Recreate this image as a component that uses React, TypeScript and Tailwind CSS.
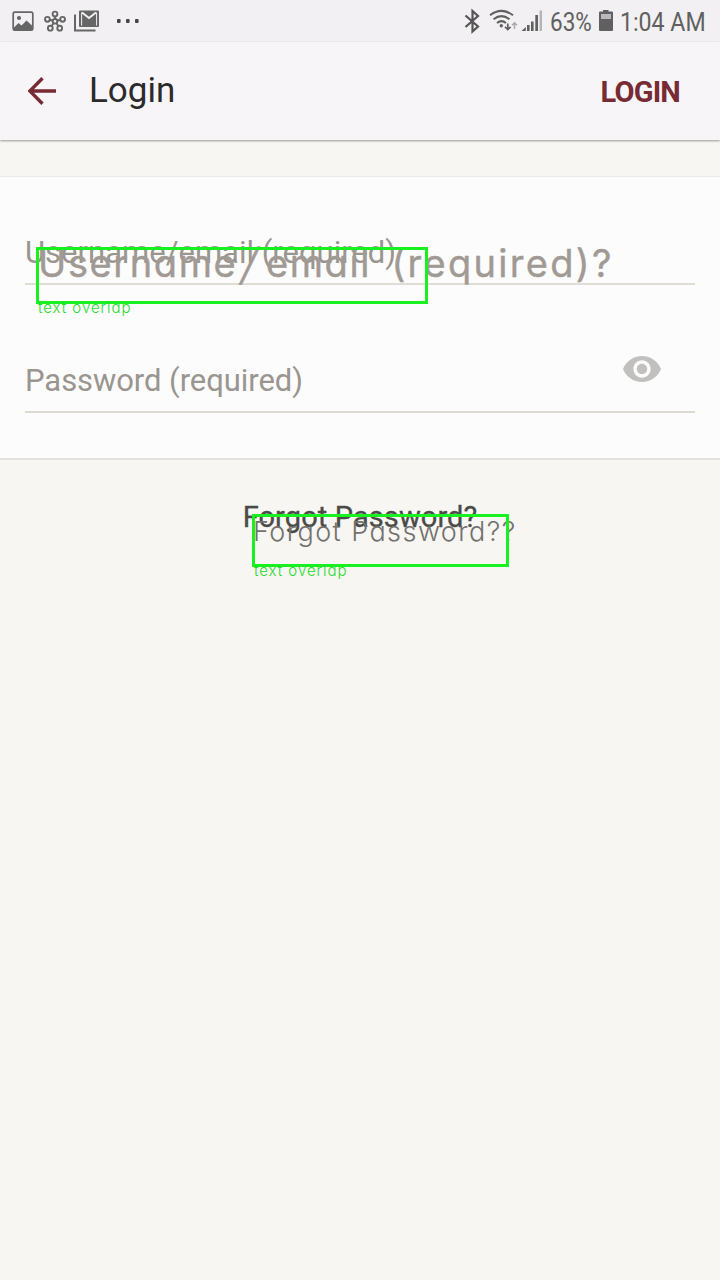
import React from "react";

function StatusIconsLeft() {
  return (
    <div className="flex h-full items-center">
      <svg width="145" height="42" viewBox="0 0 145 42">
        <rect x="13.2" y="12.2" width="19.6" height="18" rx="1.5" fill="none" stroke="#666" strokeWidth="1.7" />
        <circle cx="19" cy="18" r="2.1" fill="#666" />
        <path d="M14 27.5 L18.5 23 L21.5 25.5 L26.5 20.5 L32 25.5 V30 H14Z" fill="#666" />
        <g fill="none" stroke="#666" strokeWidth="1.9">
          <path d="M55 21.5V16 M55 21.5L49 19.5 M55 21.5L61 19.5 M55 21.5L51.5 26 M55 21.5L58.5 26" />
          <circle cx="55" cy="21.3" r="2.3" fill="#f2f0f2" />
          <circle cx="55" cy="14" r="2.4" />
          <circle cx="47.4" cy="19.3" r="2.4" />
          <circle cx="62.6" cy="19.3" r="2.4" />
          <circle cx="50.3" cy="28.2" r="2.4" />
          <circle cx="59.7" cy="28.2" r="2.4" />
        </g>
        <path d="M75 14.5V30.5H95.5" fill="none" stroke="#666" strokeWidth="2" />
        <path d="M80 10.5H98Q99 10.5 99 11.5V26Q99 27 98 27H80Q79 27 79 26V11.5Q79 10.5 80 10.5Z" fill="#666" />
        <path d="M82 12.5L89 18L96 12.5" fill="none" stroke="#f2f0f2" strokeWidth="2" />
        <path d="M81.6 12.5V25.6M96.6 12.5V25.6" fill="none" stroke="#f2f0f2" strokeWidth="1" />
        <g fill="#454545">
          <rect x="117" y="19" width="3.6" height="4" rx="1" />
          <rect x="126" y="19" width="3.6" height="4" rx="1" />
          <rect x="135" y="19" width="3.6" height="4" rx="1" />
        </g>
      </svg>
    </div>
  );
}

function StatusIconsRight() {
  return (
    <svg className="shrink-0" width="86" height="42" viewBox="460 0 86 42">
      <path d="M465.5 15.5L478 26.5L472.5 31.5V11L478 16L465.5 27" fill="none" stroke="#555" strokeWidth="2.2" />
      <g fill="none" stroke="#606060" strokeWidth="2">
        <path d="M490 15.2Q501.5 6.5 513 15.2" />
        <path d="M493.5 19.3Q501.5 13 509.5 19.3" />
        <path d="M497 23Q501.5 19.3 506 23" />
      </g>
      <circle cx="501.3" cy="25.7" r="1.7" fill="#606060" />
      <path d="M507.8 23.5V29.5M505 26.8L507.8 29.6L510.6 26.8" fill="none" stroke="#606060" strokeWidth="1.7" />
      <path d="M514.5 29V23M512 25.2L514.5 22.7L517 25.2" fill="none" stroke="#aaa" strokeWidth="1.5" />
      <path d="M521.5 31L525.8 27V31Z M527 25H529.6V31H527Z M531 21.5H533.6V31H531Z" fill="#606060" />
      <path d="M535.3 15H538V31H535.3Z" fill="#606060" />
      <path d="M539.6 10.5H542V31H539.6Z" fill="#b5b4b5" />
    </svg>
  );
}

function Battery() {
  return (
    <svg className="shrink-0" width="14" height="42" viewBox="599 0 14 42">
      <path d="M603 10H608.5V11.5H612Q613 11.5 613 12.5V30Q613 31 612 31H600Q599 31 599 30V12.5Q599 11.5 600 11.5H603Z" fill="#606060" />
      <rect x="601" y="14" width="10" height="5" fill="#b9b9b9" />
    </svg>
  );
}

type CalloutProps = { box: string; label: string; labelClass: string };

function Callout({ box, label, labelClass }: CalloutProps) {
  return (
    <div className={box}>
      <span className={labelClass}>{label}</span>
    </div>
  );
}

export default function App() {
  return (
    <div className="flex h-[1280px] w-[720px] flex-col overflow-hidden bg-[#f7f6f2] font-[Roboto,sans-serif]">
      <div className="flex h-[42px] shrink-0 items-center justify-between bg-[#f2f0f2] text-[26px] text-[#606060]">
        <StatusIconsLeft />
        <div className="flex h-full items-center">
          <StatusIconsRight />
          <div className="ml-1 w-[49px]">
            <span className="relative top-px inline-block origin-left scale-x-[0.865] whitespace-nowrap">63%</span>
          </div>
          <Battery />
          <div className="ml-[7px] w-[100px]">
            <span className="relative top-px inline-block origin-left scale-x-[0.89] whitespace-nowrap">1:04 AM</span>
          </div>
        </div>
      </div>

      <header className="z-10 flex h-[98px] shrink-0 items-center bg-[#f7f5f7] pr-10 pl-7 shadow-[0_1px_2px_rgba(0,0,0,0.38)]">
        <svg width="28" height="28" viewBox="0 0 28 28">
          <path d="M28 14H2M14.5 1.2L1.8 14L14.5 26.8" fill="none" stroke="#772b34" strokeWidth="3.4" />
        </svg>
        <h1 className="relative -top-px ml-[33px] text-[35px] leading-none text-[#2b2b2b]">Login</h1>
        <button className="relative top-px ml-auto text-[29px] leading-none font-bold tracking-[-0.8px] text-[#772b34]">LOGIN</button>
      </header>

      <main className="flex flex-col pt-9">
        <section className="flex h-[284px] flex-col border-t border-b-2 border-t-[#ebeae7] border-b-[#e2e1dd] bg-[#fcfcfc] px-[25px]">
          <div className="relative flex h-[108px] items-end border-b-2 border-[#e0dcd8] pb-[15px]">
            <span className="text-[31px] leading-[31px] whitespace-nowrap text-[#9b9590]">Username/email (required)</span>
            <span className="absolute top-[63px] left-[13px] font-[Inter,sans-serif] text-[38px] leading-[46px] tracking-[1.6px] whitespace-nowrap text-[#a19a94] [-webkit-text-stroke:0.4px_#a19a94] [font-feature-settings:'cv11']">
              Username<span className="inline-block origin-center translate-y-px scale-y-115 -skew-x-[16deg] px-[6px]">/</span> <span className="mr-[8px] -ml-[11px]">email</span> <span className="tracking-[2.3px]">(required)?</span>
            </span>
            <Callout
              box="absolute top-[70px] left-[11px] h-[57px] w-[392px] border-3 border-[#18f020]"
              label="text overlap"
              labelClass="absolute top-[48px] left-[-1px] font-[Inter,sans-serif] text-[15px] leading-[20px] tracking-[0.95px] font-light whitespace-nowrap text-[#28d82e] [font-feature-settings:'cv11']"
            />
          </div>
          <div className="flex h-[128px] items-end justify-between border-b-2 border-[#dcd8d4] pb-[15px]">
            <span className="text-[31px] leading-[31px] tracking-[-0.06px] whitespace-nowrap text-[#9b9590]">Password (required)</span>
            <svg className="mr-[34px] mb-[14px]" width="38" height="26" viewBox="1 4.5 22 15" preserveAspectRatio="none">
              <path fill="#c1c0be" d="M12 4.5C7 4.5 2.73 7.61 1 12c1.73 4.39 6 7.5 11 7.5s9.27-3.11 11-7.5c-1.73-4.39-6-7.5-11-7.5zM12 17c-2.76 0-5-2.24-5-5s2.24-5 5-5 5 2.24 5 5-2.24 5-5 5zm0-8c-1.66 0-3 1.34-3 3s1.34 3 3 3 3-1.34 3-3-1.34-3-3-3z" />
            </svg>
          </div>
        </section>

        <div className="relative flex justify-center pt-[42px]">
          <span className="text-[29px] leading-[31px] tracking-[0.1px] whitespace-nowrap text-[#4a4a48] [-webkit-text-stroke:0.3px_#4a4a48]">Forgot Password?</span>
          <span className="absolute top-[55px] left-[253px] font-[Inter,sans-serif] text-[27px] leading-[34px] font-light tracking-[1.45px] whitespace-nowrap text-[#73716e] [font-feature-settings:'cv11']">
            Forgot Password??
          </span>
          <Callout
            box="absolute top-[54px] left-[252px] h-[53px] w-[257px] border-3 border-[#18f020]"
            label="text overlap"
            labelClass="absolute top-[44px] left-[-1px] font-[Inter,sans-serif] text-[15px] leading-[20px] tracking-[0.95px] font-light whitespace-nowrap text-[#28d82e] [font-feature-settings:'cv11']"
          />
        </div>
      </main>
    </div>
  );
}
